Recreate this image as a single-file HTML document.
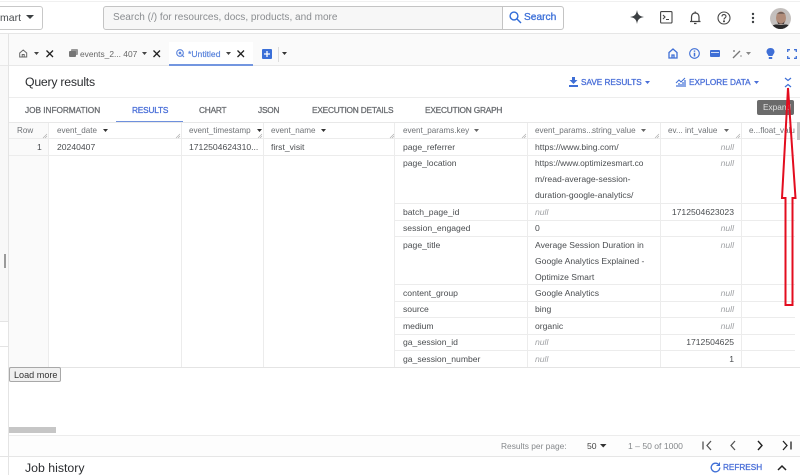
<!DOCTYPE html>
<html>
<head>
<meta charset="utf-8">
<style>
html,body{margin:0;padding:0;background:#fff}
body{width:800px;height:475px;position:relative;overflow:hidden;font-family:"Liberation Sans",Arial,sans-serif;color:#3c4043}
.a{position:absolute}
.t{position:absolute;white-space:nowrap;line-height:12px;font-size:8.6px;color:#4a4d50}
.h{color:#6f7276;font-size:8.1px}
.n{color:#a0a2a5;font-style:italic}
.r{text-align:right}
.b{color:#4a6fd8;-webkit-text-stroke:.3px #4a6fd8}
.tab{position:absolute;white-space:nowrap;font-size:8.3px;line-height:12px;top:104px;color:#6b6e72;-webkit-text-stroke:.3px #6b6e72;letter-spacing:-.2px}
.lh{position:absolute;height:1px;background:#ececec}
.lv{position:absolute;width:1px;background:#ececec}
svg{position:absolute;overflow:visible}
</style>
</head>
<body>
<!-- top bar -->
<div class="lh" style="left:0;top:1px;width:800px;background:#f0f0f0"></div>
<div class="lh" style="left:0;top:33px;width:800px;background:#e6e6e6"></div>
<div class="a" style="left:-10px;top:6px;width:51px;height:22px;border:1px solid #c8c8c8;border-radius:3px"></div>
<div class="t" style="left:0;top:12px;font-size:10.5px;color:#4a4d50">mart</div>
<svg style="left:26px;top:15px" width="10" height="6"><path d="M0 0H8L4 4Z" fill="#3c4043"/></svg>
<div class="a" style="left:103px;top:6px;width:459px;height:22px;border:1px solid #c4c4c4;border-radius:3px;background:#f7f7f7"></div>
<div class="a" style="left:502px;top:7px;width:60px;height:22px;background:#fff;border-left:1px solid #c4c4c4;border-radius:0 3px 3px 0"></div>
<div class="t" style="left:113px;top:12px;font-size:10.05px;color:#8a8d90">Search (/) for resources, docs, products, and more</div>
<svg style="left:509px;top:11px" width="13" height="13" fill="none" stroke="#2f6bd8" stroke-width="1.4"><circle cx="5" cy="5" r="3.9"/><path d="M8 8L12 12"/></svg>
<div class="t" style="left:524px;top:12px;font-size:10.2px;color:#3d70d8;-webkit-text-stroke:.3px #3d70d8">Search</div>
<svg style="left:630px;top:10px" width="14" height="14"><path d="M7 0C7.6 4.4 9.4 6.3 14 7C9.4 7.7 7.6 9.6 7 14C6.400 9.6 4.6 7.7 0 7C4.6 6.3 6.4 4.4 7 0Z" fill="#3c4043"/></svg>
<svg style="left:660px;top:11px" width="13" height="13" fill="none" stroke="#444" stroke-width="1.1"><rect x=".6" y=".6" width="11.4" height="11.4" rx="1"/><path d="M3 4L5 6L3 8M6 8.5H9"/></svg>
<svg style="left:689px;top:11px" width="13" height="14" fill="none" stroke="#444" stroke-width="1.2"><path d="M1 10.5H11.5M2.5 10.5V6C2.5 3.4 4 2 6.2 2S10 3.400 10 6V10.5"/><path d="M5 12.5H7.5M6.2 .5V2"/></svg>
<svg style="left:717px;top:11px" width="14" height="14" fill="none" stroke="#444" stroke-width="1.1"><circle cx="7" cy="7" r="6"/><path d="M5 5.5C5 4.2 6 3.6 7 3.6S9 4.3 9 5.4C9 6.8 7 6.9 7 8.5"/><circle cx="7" cy="10.3" r=".5" fill="#444"/></svg>
<svg style="left:751px;top:12px" width="4" height="12" fill="#3c4043"><circle cx="2" cy="2" r="1.2"/><circle cx="2" cy="6" r="1.2"/><circle cx="2" cy="10" r="1.2"/></svg>
<svg style="left:770px;top:8px" width="21" height="21"><defs><clipPath id="c"><circle cx="10.5" cy="10.5" r="10.5"/></clipPath></defs><g clip-path="url(#c)"><rect width="21" height="21" fill="#c4c0be"/><ellipse cx="11" cy="10" rx="5" ry="6.5" fill="#b08b78"/><path d="M6 7C7 3.5 15 3.500 16 7L15 5.5H7Z" fill="#4a4240"/><path d="M7.5 13C9 16.5 13 16.5 14.5 13L14 16H8Z" fill="#4d4341"/><path d="M0 21C2 16 6 16 11 17C16 16 20 16 21 21Z" fill="#2b2a2b"/></g></svg>

<!-- tab row -->
<div class="a" style="left:0;top:34px;width:800px;height:31px;background:#fafafa"></div>
<div class="lh" style="left:0;top:65px;width:800px;background:#e8e8e8"></div>
<div class="a" style="left:169px;top:42px;width:84px;height:23px;background:#fff"></div>
<div class="a" style="left:169px;top:64px;width:84px;height:2px;background:#7396e0"></div>
<svg style="left:19px;top:49px" width="9" height="9" fill="none" stroke="#666" stroke-width="1"><path d="M.7 4L4.2 1L7.7 4V8H.7Z M3.2 8V5.5H5.2V8"/></svg>
<svg style="left:34px;top:52px" width="6" height="4"><path d="M0 0H5L2.500 3Z" fill="#444"/></svg>
<svg style="left:46px;top:50px" width="8" height="8" stroke="#222" stroke-width="1.3"><path d="M.5 .5L7 7M7 .5L.5 7"/></svg>
<svg style="left:69px;top:49px" width="9" height="9"><rect x="2" y="0" width="7" height="6" rx="1" fill="#999"/><rect x="0" y="2" width="7" height="6" rx="1" fill="#777"/></svg>
<div class="t" style="left:80px;top:48px;font-size:8.4px;color:#666">events_2... 407</div>
<svg style="left:142px;top:52px" width="6" height="4"><path d="M0 0H5L2.500 3Z" fill="#444"/></svg>
<svg style="left:153px;top:50px" width="8" height="8" stroke="#222" stroke-width="1.3"><path d="M.5 .5L7 7M7 .5L.5 7"/></svg>
<svg style="left:176px;top:49px" width="9" height="9" fill="none" stroke="#5b84dc" stroke-width="1.1"><circle cx="4" cy="4" r="3.3"/><path d="M5.500 5.500L8 8"/><circle cx="4" cy="4" r=".8" fill="#5b84dc"/></svg>
<div class="t" style="left:188px;top:48px;font-size:8.6px;color:#5b84dc;-webkit-text-stroke:.2px #5b84dc">*Untitled</div>
<svg style="left:226px;top:52px" width="6" height="4"><path d="M0 0H5L2.500 3Z" fill="#444"/></svg>
<svg style="left:237px;top:50px" width="8" height="8" stroke="#222" stroke-width="1.3"><path d="M.5 .5L7 7M7 .5L.5 7"/></svg>
<div class="a" style="left:262px;top:49px;width:10px;height:10px;background:#3a6fd8;border-radius:1px"></div>
<svg style="left:262px;top:49px" width="10" height="10" stroke="#fff" stroke-width="1.3"><path d="M2 5H8M5 2V8"/></svg>
<div class="lv" style="left:278px;top:47px;height:15px;background:#ddd"></div>
<svg style="left:282px;top:52px" width="6" height="4"><path d="M0 0H5L2.500 3Z" fill="#333"/></svg>
<svg style="left:668px;top:48px" width="10" height="11" fill="none" stroke="#3f6fd6" stroke-width="1.3"><path d="M1 4.500L5 1L9 4.500V10H1Z"/><path d="M4 10V7H6V10"/></svg>
<svg style="left:689px;top:48px" width="11" height="11" fill="none" stroke="#3f6fd6" stroke-width="1.100"><circle cx="5.500" cy="5.500" r="4.800"/><path d="M5.500 4.800V8.500M5.500 2.500V3.700" stroke-width="1.500"/></svg>
<div class="a" style="left:710px;top:50px;width:10px;height:7px;background:#3f6fd6;border-radius:1px"></div>
<div class="a" style="left:711px;top:52px;width:8px;height:1px;background:#cfdcf6"></div>
<svg style="left:732px;top:49px" width="11" height="10" stroke="#777" fill="none" stroke-width="1.300"><path d="M1 9L8 2"/><path d="M1 2H3M2 1V3M8 7H10" stroke-width=".8"/></svg>
<svg style="left:746px;top:52px" width="6" height="4"><path d="M0 0H5L2.500 3Z" fill="#888"/></svg>
<svg style="left:766px;top:48px" width="9" height="12"><path d="M4.500 0C7 0 8.500 1.700 8.500 3.800C8.500 5.500 7 6.500 6.500 8H2.500C2 6.500 .5 5.500 .5 3.800C.5 1.700 2 0 4.500 0Z" fill="#3f6fd6"/><rect x="2.800" y="9" width="3.400" height="2" fill="#3f6fd6"/></svg>
<svg style="left:787px;top:49px" width="10" height="10" fill="none" stroke="#3f6fd6" stroke-width="1.300"><path d="M.7 3V.7H3M7 .7H9.300V3M9.300 7V9.300H7M3 9.300H.7V7"/></svg>

<!-- left rail -->
<div class="a" style="left:0;top:66px;width:8px;height:256px;background:#f8f8f8"></div>
<div class="lv" style="left:8px;top:34px;height:441px;background:#e4e4e4"></div>
<div class="a" style="left:4px;top:254px;width:2px;height:14px;background:#9a9a9a"></div>
<div class="lh" style="left:0;top:321px;width:8px;background:#e4e4e4"></div>
<div class="lh" style="left:0;top:346px;width:8px;background:#e4e4e4"></div>
<div class="lh" style="left:0;top:456px;width:8px;background:#e4e4e4"></div>

<!-- results header -->
<div class="t" style="left:25px;top:75px;font-size:12.300px;line-height:14px;color:#2b2d30;letter-spacing:-.25px">Query results</div>
<svg style="left:569px;top:77px" width="9" height="10" fill="#3f6fd6"><path d="M3 0H6V3H8.500L4.500 7L.5 3H3ZM0 8H9V10H0Z"/></svg>
<div class="t b" style="left:581px;top:77px;font-size:8.200px">SAVE RESULTS</div>
<svg style="left:645px;top:81px" width="6" height="4"><path d="M0 0H5L2.500 3Z" fill="#4a6fd8"/></svg>
<svg style="left:676px;top:77px" width="10" height="10" fill="none" stroke="#3f6fd6"><path d="M0 6L3 3L5 5L9 1" stroke-width="1"/><path d="M1 10V8M3 10V6M5 10V7M7 10V5M9 10V3" stroke-width="1.200"/></svg>
<div class="t b" style="left:689px;top:77px;font-size:8.200px">EXPLORE DATA</div>
<svg style="left:754px;top:81px" width="6" height="4"><path d="M0 0H5L2.500 3Z" fill="#4a6fd8"/></svg>
<svg style="left:784px;top:77px" width="8" height="11" fill="none" stroke="#3f6fd6" stroke-width="1.200"><path d="M1 1L4 3.500L7 1M1 10L4 7.500L7 10"/></svg>
<div class="lh" style="left:9px;top:97px;width:791px;background:#ededed"></div>

<!-- tabs -->
<div class="tab" style="left:25px;letter-spacing:-.05px">JOB INFORMATION</div>
<div class="tab" style="left:132px;color:#4a6fd8;-webkit-text-stroke-color:#4a6fd8">RESULTS</div>
<div class="tab" style="left:199px">CHART</div>
<div class="tab" style="left:258px">JSON</div>
<div class="tab" style="left:312px">EXECUTION DETAILS</div>
<div class="tab" style="left:425px">EXECUTION GRAPH</div>
<div class="a" style="left:116px;top:121px;width:67px;height:1px;background:#6e90dd"></div>
<div class="lh" style="left:9px;top:122px;width:791px;background:#e8e8e8"></div>

<!-- table -->
<div class="a" style="left:9px;top:123px;width:39px;height:244px;background:#fafafa"></div>
<div class="lv" style="left:48px;top:123px;height:244px"></div>
<div class="lv" style="left:181px;top:123px;height:244px"></div>
<div class="lv" style="left:263px;top:123px;height:244px"></div>
<div class="lv" style="left:394px;top:123px;height:244px"></div>
<div class="lv" style="left:527px;top:123px;height:244px"></div>
<div class="lv" style="left:660px;top:123px;height:244px"></div>
<div class="lv" style="left:741px;top:123px;height:244px"></div>
<div class="lh" style="left:9px;top:138px;width:786px"></div>
<div class="lh" style="left:9px;top:155px;width:786px"></div>
<div class="lh" style="left:395px;top:203px;width:400px"></div>
<div class="lh" style="left:395px;top:220px;width:400px"></div>
<div class="lh" style="left:395px;top:236px;width:400px"></div>
<div class="lh" style="left:395px;top:284px;width:400px"></div>
<div class="lh" style="left:395px;top:301px;width:400px"></div>
<div class="lh" style="left:395px;top:317px;width:400px"></div>
<div class="lh" style="left:395px;top:334px;width:400px"></div>
<div class="lh" style="left:395px;top:350px;width:400px"></div>
<div class="lh" style="left:9px;top:367px;width:791px;background:#e4e4e4"></div>

<div class="t h" style="left:17px;top:125px">Row</div>
<div class="t h" style="left:57px;top:125px">event_date</div>
<div class="t h" style="left:189px;top:125px">event_timestamp</div>
<div class="t h" style="left:271px;top:125px">event_name</div>
<div class="t h" style="left:403px;top:125px">event_params.key</div>
<div class="t h" style="left:535px;top:125px">event_params...</div>
<div class="t h" style="left:592px;top:125px">string_value</div>
<div class="t h" style="left:668px;top:125px">ev...</div>
<div class="t h" style="left:685px;top:125px">int_value</div>
<div class="t h" style="left:749px;top:125px;width:46px;overflow:hidden">e...float_value</div>
<svg style="left:103px;top:129px" width="6" height="4"><path d="M0 0H5L2.500 3Z" fill="#333"/></svg>
<svg style="left:257px;top:129px" width="6" height="4"><path d="M0 0H5L2.500 3Z" fill="#333"/></svg>
<svg style="left:321px;top:129px" width="6" height="4"><path d="M0 0H5L2.500 3Z" fill="#333"/></svg>
<svg style="left:474px;top:129px" width="6" height="4"><path d="M0 0H5L2.500 3Z" fill="#666"/></svg>
<svg style="left:641px;top:129px" width="6" height="4"><path d="M0 0H5L2.500 3Z" fill="#666"/></svg>
<svg style="left:724px;top:129px" width="6" height="4"><path d="M0 0H5L2.500 3Z" fill="#666"/></svg>
<svg style="left:43px;top:134px" width="5" height="5" stroke="#aaa" stroke-width=".6"><path d="M0 4L4 0M2 4L4 2"/></svg>
<svg style="left:176px;top:134px" width="5" height="5" stroke="#aaa" stroke-width=".6"><path d="M0 4L4 0M2 4L4 2"/></svg>
<svg style="left:258px;top:134px" width="5" height="5" stroke="#aaa" stroke-width=".6"><path d="M0 4L4 0M2 4L4 2"/></svg>
<svg style="left:390px;top:134px" width="5" height="5" stroke="#aaa" stroke-width=".6"><path d="M0 4L4 0M2 4L4 2"/></svg>
<svg style="left:522px;top:134px" width="5" height="5" stroke="#aaa" stroke-width=".6"><path d="M0 4L4 0M2 4L4 2"/></svg>
<svg style="left:655px;top:134px" width="5" height="5" stroke="#aaa" stroke-width=".6"><path d="M0 4L4 0M2 4L4 2"/></svg>
<svg style="left:736px;top:134px" width="5" height="5" stroke="#aaa" stroke-width=".6"><path d="M0 4L4 0M2 4L4 2"/></svg>

<div class="t" style="left:37px;top:141px">1</div>
<div class="t" style="left:57px;top:141px">20240407</div>
<div class="t" style="left:189px;top:141px">1712504624310...</div>
<div class="t" style="left:271px;top:141px">first_visit</div>

<div class="t" style="left:403px;top:141px">page_referrer</div>
<div class="t" style="left:403px;top:157px">page_location</div>
<div class="t" style="left:403px;top:206px">batch_page_id</div>
<div class="t" style="left:403px;top:222px">session_engaged</div>
<div class="t" style="left:403px;top:239px">page_title</div>
<div class="t" style="left:403px;top:287px">content_group</div>
<div class="t" style="left:403px;top:303px">source</div>
<div class="t" style="left:403px;top:320px">medium</div>
<div class="t" style="left:403px;top:336px">ga_session_id</div>
<div class="t" style="left:403px;top:353px">ga_session_number</div>

<div class="t" style="left:535px;top:141px">https://www.bing.com/</div>
<div class="t" style="left:535px;top:157px;font-size:8.4px">https://www.optimizesmart.co</div>
<div class="t" style="left:535px;top:173px">m/read-average-session-</div>
<div class="t" style="left:535px;top:189px">duration-google-analytics/</div>
<div class="t n" style="left:535px;top:206px">null</div>
<div class="t" style="left:535px;top:222px">0</div>
<div class="t" style="left:535px;top:239px">Average Session Duration in</div>
<div class="t" style="left:535px;top:255px">Google Analytics Explained -</div>
<div class="t" style="left:535px;top:271px">Optimize Smart</div>
<div class="t" style="left:535px;top:287px">Google Analytics</div>
<div class="t" style="left:535px;top:303px">bing</div>
<div class="t" style="left:535px;top:320px">organic</div>
<div class="t n" style="left:535px;top:336px">null</div>
<div class="t n" style="left:535px;top:353px">null</div>

<div class="t n r" style="right:66px;top:141px">null</div>
<div class="t n r" style="right:66px;top:157px">null</div>
<div class="t r" style="right:66px;top:206px">1712504623023</div>
<div class="t n r" style="right:66px;top:222px">null</div>
<div class="t n r" style="right:66px;top:239px">null</div>
<div class="t n r" style="right:66px;top:287px">null</div>
<div class="t n r" style="right:66px;top:303px">null</div>
<div class="t n r" style="right:66px;top:320px">null</div>
<div class="t r" style="right:66px;top:336px">1712504625</div>
<div class="t r" style="right:66px;top:353px">1</div>

<div class="a" style="left:797px;top:122px;width:3px;height:18px;background:#c4c4c4"></div>

<!-- tooltip -->
<div class="a" style="left:757px;top:100px;width:37px;height:15px;background:#6b6b6b;border-radius:2px"></div>
<div class="t" style="left:763px;top:101px;font-size:8.300px;color:#e2e2e2">Expand</div>

<!-- red arrow -->
<svg style="left:0;top:0" width="800" height="475" fill="none"><path d="M788 88L782 198H785.500V305H792.500V198H795.500Z" stroke="#e30d1f" stroke-width="2"/></svg>

<!-- load more -->
<div class="a" style="left:9px;top:367px;width:50px;height:13px;background:#f0f0f0;border:1px solid #a8a8a8;border-radius:2px"></div>
<div class="t" style="left:14px;top:369px;font-size:9.100px;color:#333">Load more</div>

<!-- scrollbar + footer -->
<div class="a" style="left:9px;top:427px;width:47px;height:6px;background:#c6c6c6"></div>
<div class="lh" style="left:9px;top:435px;width:791px;background:#ececec"></div>
<div class="a" style="left:9px;top:436px;width:791px;height:20px;background:#fdfdfd"></div>
<div class="lh" style="left:9px;top:456px;width:791px;background:#e6e6e6"></div>
<div class="t" style="left:501px;top:440px;color:#85888b;font-size:8.4px">Results per page:</div>
<div class="t" style="left:587px;top:440px;color:#444">50</div>
<svg style="left:600px;top:444px" width="7" height="4"><path d="M0 0H6.500L3.250 3.500Z" fill="#333"/></svg>
<div class="t" style="left:628px;top:440px;color:#85888b">1 – 50 of 1000</div>
<svg style="left:702px;top:440px" width="11" height="11" fill="none" stroke="#555" stroke-width="1.300"><path d="M1 1.500V9.500M9 1L5 5.500L9 10"/></svg>
<svg style="left:729px;top:440px" width="8" height="11" fill="none" stroke="#555" stroke-width="1.300"><path d="M6 1L2 5.500L6 10"/></svg>
<svg style="left:756px;top:440px" width="8" height="11" fill="none" stroke="#222" stroke-width="1.400"><path d="M2 1L6 5.500L2 10"/></svg>
<svg style="left:782px;top:440px" width="11" height="11" fill="none" stroke="#222" stroke-width="1.300"><path d="M9 1.500V9.500M1 1L5 5.500L1 10"/></svg>
<div class="t" style="left:25px;top:461px;font-size:12.300px;line-height:14px;color:#2b2d30">Job history</div>
<svg style="left:710px;top:462px" width="11" height="11" fill="none" stroke="#3f6fd6" stroke-width="1.300"><path d="M9 3A4.300 4.300 0 1 0 9.800 5.500"/><path d="M9.500 .5V3.500H6.500" stroke-width="1"/></svg>
<div class="t b" style="left:723px;top:462px;font-size:8.200px">REFRESH</div>
<svg style="left:777px;top:465px" width="10" height="6" fill="none" stroke="#222" stroke-width="1.500"><path d="M1 5L5 1L9 5"/></svg>
</body>
</html>
